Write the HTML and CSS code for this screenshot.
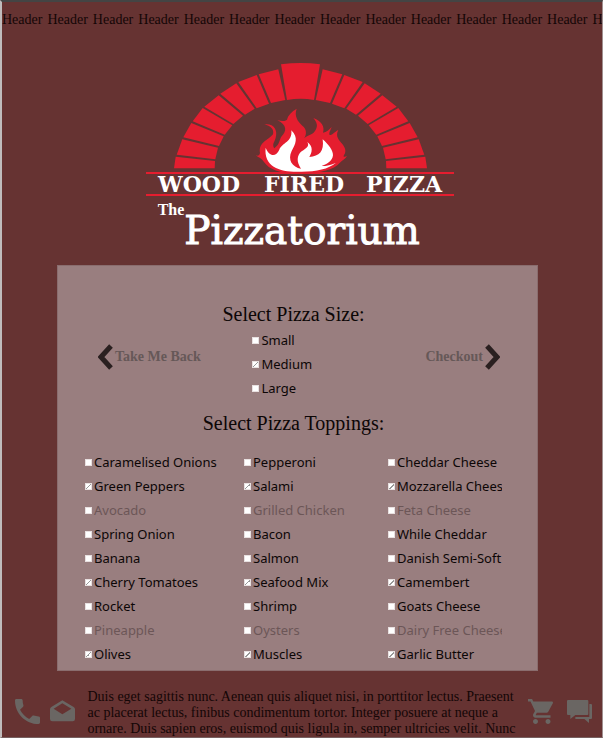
FILE: index.html
```html
<!DOCTYPE html>
<html lang="en">
<head>
<meta charset="utf-8">
<meta name="viewport" content="width=device-width, initial-scale=1">
<title>The Pizzatorium</title>
<link rel="stylesheet" href="styles.css">
</head>
<body>
<div class="page">
  <header class="ticker">
    <span>Header</span><span>Header</span><span>Header</span><span>Header</span><span>Header</span><span>Header</span><span>Header</span><span>Header</span><span>Header</span><span>Header</span><span>Header</span><span>Header</span><span>Header</span><span>Header</span>
  </header>

  <svg class="logo" viewBox="146 60 308 190" role="img" aria-label="Wood Fired Pizza, The Pizzatorium">
    <defs>
      <g id="bricks">
        <path d="M258.7 74.3 278.3 69.3 285.3 100 271 103Z"/>
        <path d="M238.3 82 256.7 75 269 103.7 256.7 108.3Z"/>
        <path d="M220.3 93.7 236.3 83.3 254.7 108.7 245 114.7Z"/>
        <path d="M204.3 106.7 218.7 95.3 243 115.7 233.3 124Z"/>
        <path d="M192.7 121.3 202.7 108 232.3 125.3 224.7 134.7Z"/>
        <path d="M183.3 137.3 191.3 123 223.7 136.3 219 146Z"/>
        <path d="M176.7 154.7 182.3 139.3 218 147.7 215.3 159.3Z"/>
        <path d="M174 168.3 175.7 156.7 215 161 214.7 168.3Z"/>
      </g>
    </defs>
    <g class="logo-red">
      <use href="#bricks"/>
      <use href="#bricks" transform="matrix(-1 0 0 1 601 0)"/>
      <path d="M281 64.3Q301 61.500 320 64.300L314 100Q301 97.500 287 100Z"/>
      <path d="M146 172h308v2H146zM146 194h308v2H146z"/>
      <g transform="translate(250 102) scale(.3333)">
        <path d="M150 214C95 216 58 204 42 180C36 170 25 166 17 160C25 163 28 160 30 153C25 120 55 115 69 97C73 82 62 72 43 67C70 63 84 82 77 107C74 120 65 126 73 139C91 126 88 111 95 103C110 87 112 70 82 54C96 58 105 58 111 53C114 40 125 29 140 20C132 42 143 58 157 71C170 80 171 98 162 109C180 96 190 99 198 82C203 72 202 62 190 48C215 57 225 75 219 92C230 91 237 83 245 75C241 87 236 92 239 99C247 100 252 91 265 84C255 103 267 114 277 126C290 142 287 153 281 161C280 166 286 165 291 162C286 172 277 174 272 180C250 206 210 213 150 214Z"/>
      </g>
    </g>
    <g class="logo-white" transform="translate(250 102) scale(.3333)">
      <path d="M155 209C95 212 40 197 47 137C58 165 78 165 88 143C97 122 128 120 124 85C147 107 136 127 125 147C112 174 127 196 153 200C139 180 140 160 155 148C170 138 179 133 172 120C190 133 187 150 178 165C208 163 223 149 218 112C237 129 249 145 249 160C247 179 229 187 215 192C230 192 244 189 258 182C235 201 200 209 155 209Z"/>
    </g>
    <g class="logo-white logo-caps">
      <text x="199" y="192">WOOD</text>
      <text x="304" y="192">FIRED</text>
      <text x="404" y="192">PIZZA</text>
    </g>
    <text class="logo-white logo-the" x="171" y="215">The</text>
    <text class="logo-white logo-name" x="302" y="244">Pizzatorium</text>
  </svg>

  <main class="panel">
    <div class="chooser">
      <a class="step back" href="#back">
        <svg class="arrow" viewBox="0 0 15 26" aria-hidden="true"><path d="M13 2 3 13l10 11"/></svg>Take Me Back</a>
      <section class="sizes">
        <h2>Select Pizza Size:</h2>
        <div class="options">
          <label><input type="checkbox">Small</label>
          <label><input type="checkbox" checked>Medium</label>
          <label><input type="checkbox">Large</label>
        </div>
      </section>
      <a class="step next" href="#checkout">Checkout<svg class="arrow" viewBox="0 0 15 26" aria-hidden="true"><path d="m2 2 10 11L2 24"/></svg></a>
    </div>

    <section class="toppings">
      <h2>Select Pizza Toppings:</h2>
      <div class="columns">
        <div class="options">
          <label><input type="checkbox">Caramelised Onions</label>
          <label><input type="checkbox" checked>Green Peppers</label>
          <label class="off"><input type="checkbox" disabled>Avocado</label>
          <label><input type="checkbox">Spring Onion</label>
          <label><input type="checkbox">Banana</label>
          <label><input type="checkbox" checked>Cherry Tomatoes</label>
          <label><input type="checkbox">Rocket</label>
          <label class="off"><input type="checkbox" disabled>Pineapple</label>
          <label><input type="checkbox" checked>Olives</label>
        </div>
        <div class="options">
          <label><input type="checkbox">Pepperoni</label>
          <label><input type="checkbox" checked>Salami</label>
          <label class="off"><input type="checkbox" disabled>Grilled Chicken</label>
          <label><input type="checkbox">Bacon</label>
          <label><input type="checkbox">Salmon</label>
          <label><input type="checkbox" checked>Seafood Mix</label>
          <label><input type="checkbox">Shrimp</label>
          <label class="off"><input type="checkbox" disabled>Oysters</label>
          <label><input type="checkbox" checked>Muscles</label>
        </div>
        <div class="options">
          <label><input type="checkbox">Cheddar Cheese</label>
          <label><input type="checkbox" checked>Mozzarella Cheese</label>
          <label class="off"><input type="checkbox" disabled>Feta Cheese</label>
          <label><input type="checkbox">While Cheddar</label>
          <label><input type="checkbox">Danish Semi-Soft</label>
          <label><input type="checkbox" checked>Camembert</label>
          <label><input type="checkbox">Goats Cheese</label>
          <label class="off"><input type="checkbox" disabled>Dairy Free Cheese</label>
          <label><input type="checkbox" checked>Garlic Butter</label>
        </div>
      </div>
    </section>
  </main>

  <footer class="footer">
    <nav class="links" aria-label="Contact">
      <a href="#phone" aria-label="Phone"><svg viewBox="3 3 18 18"><path d="M6.620 10.790c1.440 2.830 3.760 5.140 6.590 6.590l2.200-2.200c.27-.27.67-.36 1.020-.24 1.120.37 2.330.57 3.570.57.55 0 1 .45 1 1V20c0 .55-.45 1-1 1-9.390 0-17-7.610-17-17 0-.55.45-1 1-1h3.500c.55 0 1 .45 1 1 0 1.250.2 2.450.57 3.570.11.35.03.74-.25 1.020l-2.200 2.200z"/></svg></a>
      <a href="#mail" aria-label="Email"><svg viewBox="0 0 75 75"><path fill-rule="evenodd" d="M37 4 71 24Q75 26 75 31V60Q75 67 68 67H7Q0 67 0 60V31Q0 26 4 24ZM37 13 11 29 37 46 64 29Z"/></svg></a>
    </nav>
    <p>Duis eget sagittis nunc. Aenean quis aliquet nisi, in porttitor lectus. Praesent<br>ac placerat lectus, finibus condimentum tortor. Integer posuere at neque a<br>ornare. Duis sapien eros, euismod quis ligula in, semper ultricies velit. Nunc</p>
    <nav class="links shop" aria-label="Shop">
      <a href="#cart" aria-label="Cart"><svg viewBox="1 2 20 20"><path d="M7 18c-1.100 0-1.990.9-1.990 2S5.900 22 7 22s2-.9 2-2-.9-2-2-2zM1 2v2h2l3.600 7.590-1.350 2.450c-.16.28-.25.61-.25.96 0 1.100.9 2 2 2h12v-2H7.420c-.14 0-.25-.11-.25-.25l.03-.12.9-1.630h7.450c.75 0 1.410-.41 1.750-1.030l3.580-6.490c.08-.14.12-.31.12-.48 0-.55-.45-1-1-1H5.210l-.94-2H1zm16 16c-1.100 0-1.990.9-1.990 2s.89 2 1.990 2 2-.9 2-2-.9-2-2-2z"/></svg></a>
      <a href="#chat" aria-label="Chat"><svg viewBox="0 0 75 75"><path d="M3 3H61Q64 3 64 6V45Q64 48 61 48H25L10 60V48H3Q0 48 0 45V6Q0 3 3 3ZM67 15H72Q75 15 75 18V57Q75 60 72 60H66V72L52 60H25V54H67Z"/></svg></a>
    </nav>
  </footer>
</div>
</body>
</html>
```
FILE: styles.css
```css
* {
  box-sizing: border-box;
}

body {
  margin: 0;
  background: #663332;
  color: #0c0606;
  font-family: "Liberation Serif", serif;
}

.page {
  border-top: 2px solid #444;
  border-left: 2px solid #c0bcbc;
  border-right: 1px solid #a09090;
  border-bottom: 1px solid #776060;
  overflow: hidden;
}

.ticker {
  display: flex;
  gap: 5px;
  padding-top: 9px;
  font-size: 14px;
  line-height: 18px;
  color: #140606;
}

.logo {
  display: block;
  width: 308px;
  height: 190px;
  margin: 31px auto 0 calc(50% - 156px);
}

.logo-red {
  fill: #e51d2f;
}

.logo-white {
  fill: #fff;
}

.logo-caps,
.logo-the,
.logo-name {
  text-anchor: middle;
  font-weight: bold;
}

.logo-caps {
  font-family: "DejaVu Serif", serif;
  font-size: 22px;
}

.logo-the {
  font-size: 16px;
}

.logo-name {
  font-family: "DejaVu Serif", serif;
  font-size: 39px;
  font-weight: normal;
  stroke: #fff;
  stroke-width: 1;
}

.panel {
  margin: 15px 64px 0 55px;
  padding: 36px 35px 4px 27px;
  border: 1px solid #8a6d6e;
  background: #997e7f;
}

.chooser {
  display: grid;
  grid-template-columns: 1fr auto 1fr;
}

h2 {
  margin: 0;
  font-size: 20px;
  font-weight: normal;
  line-height: 24px;
  text-align: center;
}

.options {
  display: flex;
  flex-direction: column;
  min-width: 0;
  font-family: "Noto Sans", sans-serif;
  font-size: 13px;
  line-height: 24px;
}

.sizes .options {
  padding: 2px 0 0 30px;
}

label {
  display: flex;
  align-items: center;
  gap: 2px;
  overflow: hidden;
  white-space: nowrap;
}

label.off {
  color: #6c5657;
}

input[type="checkbox"] {
  appearance: none;
  flex: none;
  width: 7px;
  height: 7px;
  margin: 0;
  background: #fff;
  border: 1px solid #e8e0e0;
}

input[type="checkbox"]:checked {
  background: linear-gradient(135deg, #fff 45%, #999 45%, #999 60%, #fff 60%);
}

.step {
  display: flex;
  align-items: center;
  align-self: start;
  gap: 2px;
  height: 28px;
  margin-top: 41px;
  color: #665858;
  font-size: 14px;
  font-weight: bold;
  text-decoration: none;
}

.back {
  padding-left: 13px;
}

.next {
  justify-content: flex-end;
  padding-right: 2px;
}

.arrow {
  width: 15px;
  height: 26px;
  fill: none;
  stroke: #2a2020;
  stroke-width: 5;
}

.toppings {
  margin-top: 11px;
}

.columns {
  display: grid;
  grid-template-columns: 159fr 144fr 114fr;
  margin-top: 15px;
}

.footer {
  display: flex;
  align-items: flex-start;
  justify-content: space-between;
  padding: 18px 10px 0 13px;
}

.footer p {
  margin: 0;
  font-size: 14px;
  line-height: 16px;
  white-space: nowrap;
  color: #140606;
}

.links {
  display: flex;
  gap: 10px;
  padding-top: 10px;
}

.shop {
  gap: 14px;
}

.links svg {
  display: block;
  width: 25px;
  height: 25px;
  fill: #6a6663;
}
```
